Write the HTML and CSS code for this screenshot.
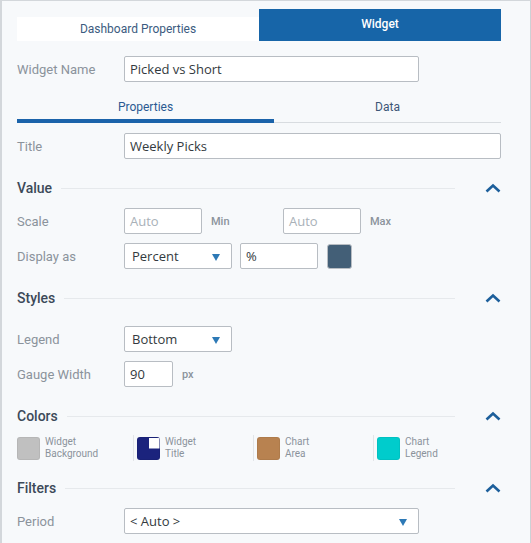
FILE: index.html
```html
<!DOCTYPE html>
<html>
<head>
<meta charset="utf-8">
<link rel="stylesheet" href="styles.css">
</head>
<body>
<div class="panel">
  <div class="tabs">
    <div class="tab">Dashboard Properties</div>
    <div class="tab active">Widget</div>
  </div>

  <div class="row name-row">
    <div class="label">Widget Name</div>
    <div class="input w-295">Picked vs Short</div>
  </div>

  <div class="subtabs">
    <div class="subtab active">Properties</div>
    <div class="subtab data">Data</div>
  </div>

  <div class="row title-row">
    <div class="label">Title</div>
    <div class="input w-full">Weekly Picks</div>
  </div>

  <div class="section">
    <span class="section-title">Value</span>
    <span class="section-line"></span>
    <svg class="chev" width="16" height="10" viewBox="0 0 16 10"><polyline points="1.5,8.5 8,2.5 14.5,8.5" fill="none" stroke="#1d5f9b" stroke-width="2.6"/></svg>
  </div>
  <div class="row">
    <div class="label">Scale</div>
    <div class="input w-78 ph">Auto</div>
    <div class="unit">Min</div>
    <div class="input w-78 ph">Auto</div>
    <div class="unit">Max</div>
  </div>
  <div class="row">
    <div class="label">Display as</div>
    <div class="input select w-108">Percent<span class="caret"></span></div>
    <div class="input w-78 ml8">%</div>
    <div class="swatch-btn"></div>
  </div>

  <div class="section">
    <span class="section-title">Styles</span>
    <span class="section-line"></span>
    <svg class="chev" width="16" height="10" viewBox="0 0 16 10"><polyline points="1.5,8.5 8,2.5 14.5,8.5" fill="none" stroke="#1d5f9b" stroke-width="2.6"/></svg>
  </div>
  <div class="row first-styles">
    <div class="label">Legend</div>
    <div class="input select w-108">Bottom<span class="caret"></span></div>
  </div>
  <div class="row">
    <div class="label">Gauge Width</div>
    <div class="input w-49">90</div>
    <div class="unit">px</div>
  </div>

  <div class="section">
    <span class="section-title">Colors</span>
    <span class="section-line"></span>
    <svg class="chev" width="16" height="10" viewBox="0 0 16 10"><polyline points="1.5,8.5 8,2.5 14.5,8.5" fill="none" stroke="#1d5f9b" stroke-width="2.6"/></svg>
  </div>
  <div class="colors">
    <div class="color-item">
      <span class="sw sw-gray"></span>
      <span class="color-label">Widget<br>Background</span>
    </div>
    <div class="color-item">
      <span class="sw sw-navy"></span>
      <span class="color-label">Widget<br>Title</span>
    </div>
    <div class="color-item">
      <span class="sw sw-brown"></span>
      <span class="color-label">Chart<br>Area</span>
    </div>
    <div class="color-item">
      <span class="sw sw-cyan"></span>
      <span class="color-label">Chart<br>Legend</span>
    </div>
  </div>

  <div class="section filters">
    <span class="section-title">Filters</span>
    <span class="section-line"></span>
    <svg class="chev" width="16" height="10" viewBox="0 0 16 10"><polyline points="1.5,8.5 8,2.5 14.5,8.5" fill="none" stroke="#1d5f9b" stroke-width="2.6"/></svg>
  </div>
  <div class="row">
    <div class="label">Period</div>
    <div class="input select w-295 period">&lt; Auto &gt;<span class="caret"></span></div>
  </div>
</div>
</body>
</html>
```

FILE: styles.css
```css
* { box-sizing: border-box; }
html, body { margin: 0; padding: 0; background: #f7f9fb; }
body { font-family: Roboto, "Liberation Sans", sans-serif; }

.panel {
  width: 531px;
  height: 543px;
  border-top: 1px solid #d3d7db;
  border-left: 2px solid #d3d7db;
  border-right: 1px solid #cdd1d5;
  padding: 8px 29px 0 15px;
  background: #f7f9fb;
  overflow: hidden;
}

.tabs { display: flex; align-items: flex-end; height: 32px; }
.tab {
  width: 242px;
  height: 24px;
  background: #ffffff;
  color: #3b5b80;
  font-size: 12px;
  display: flex; align-items: center; justify-content: center;
}
.tab.active {
  height: 32px;
  background: #1765a8;
  color: #ffffff;
  font-weight: 500;
  padding-bottom: 2px;
}

.row { display: flex; align-items: center; height: 26px; margin-top: 9px; }
.name-row { margin-top: 15px; }
.title-row { margin-top: 10px; }

.label {
  width: 107px;
  flex: none;
  font-size: 13px;
  color: #8b939b;
}

.input {
  height: 26px;
  background: #fff;
  border: 1px solid #b8bdc3;
  border-radius: 2px;
  font-family: "Open Sans", "Liberation Sans", sans-serif;
  font-size: 13px;
  color: #333a40;
  padding-left: 5px;
  display: flex; align-items: center;
  position: relative;
  flex: none;
}
.input.ph { color: #a9b1b8; }
.w-295 { width: 295px; }
.w-full { width: 377px; }
.w-78 { width: 78px; }
.w-108 { width: 108px; }
.w-49 { width: 49px; }
.ml8 { margin-left: 8px; }
.select { padding-left: 7px; }
.period { padding-left: 5px; }

.caret {
  position: absolute;
  right: 11px;
  top: 10px;
  width: 0; height: 0;
  border-left: 4px solid transparent;
  border-right: 4px solid transparent;
  border-top: 7px solid #2d79b6;
}

.unit {
  font-size: 11px;
  font-weight: 500;
  color: #8b939b;
  margin-left: 9px;
  width: 72px;
}

.swatch-btn {
  width: 25px; height: 25px;
  margin-left: 9px;
  background: #435f77;
  border: 1px solid #b8bdc3;
  border-radius: 3px;
}

.subtabs {
  display: flex;
  height: 29px;
  margin-top: 12px;
  border-bottom: 1px solid #d8dce0;
}
.subtab {
  font-size: 12px;
  color: #3d5677;
  display: flex; align-items: flex-start; justify-content: center;
  padding-top: 6px;
}
.subtab.active {
  width: 257px;
  color: #2b5a92;
  border-bottom: 4px solid #1b63aa;
  margin-bottom: -1px;
}
.subtab.data { width: 227px; }

.section {
  display: flex; align-items: center;
  height: 20px;
  margin-top: 19px;
  margin-bottom: 10px;
}
.section + .row.first-styles { margin-top: 18px; }
.section-title {
  font-size: 14px;
  font-weight: 500;
  color: #3c4959;
}
.section-line {
  flex: 1;
  height: 1px;
  background: #e6e9ec;
  margin: 0 30px 0 9px;
}
.chev { display: block; flex: none; }

.colors { display: flex; height: 24px; margin-top: 10px; align-items: center; }
.color-item {
  display: flex; align-items: center;
  width: 120px;
  height: 26px;
  border-left: 1px solid #e2e5e8;
  padding-left: 3px;
}
.color-item:first-child { width: 116px; border-left: none; padding-left: 0; }
.sw {
  width: 23px; height: 23px;
  border-radius: 3px;
  flex: none;
  border: 1px solid rgba(0,0,0,0.05);
}
.sw-gray { background: #c0c0c0; }
.sw-navy {
  background: linear-gradient(#ffffff, #ffffff) no-repeat right top / 50% 50%, #1b237d;
}
.sw-brown { background: #b88250; }
.sw-cyan { background: #00cccc; }
.color-label {
  margin-left: 5px;
  font-size: 10px;
  line-height: 12px;
  color: #8b939b;
}

.filters { margin-top: 18px; }
```
